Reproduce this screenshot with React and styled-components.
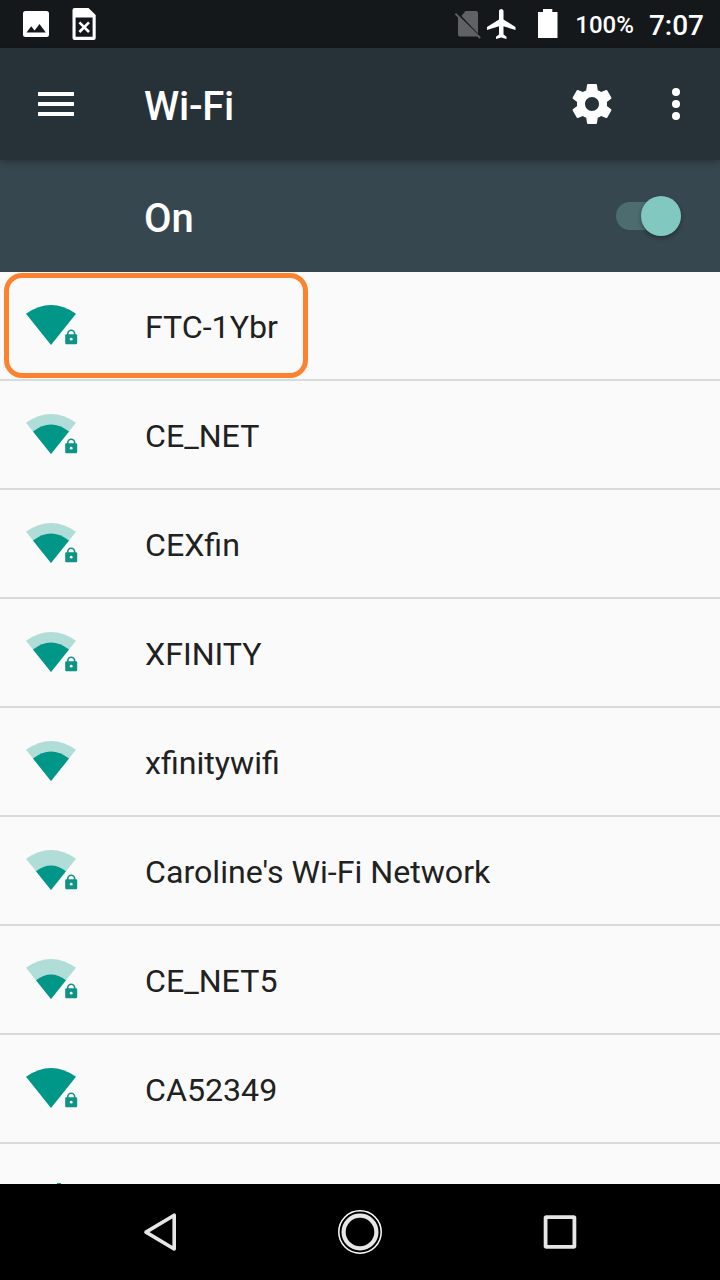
import React from 'react';
import styled, { createGlobalStyle } from 'styled-components';

const GlobalStyle = createGlobalStyle`
  *, *::before, *::after { box-sizing: border-box; }
  html, body { margin: 0; padding: 0; }
  body { font-family: Roboto, "Noto Sans", sans-serif; overflow: hidden; }
  svg { display: block; flex: none; }
`;

const Screen = styled.div`
  display: flex;
  flex-direction: column;
  width: 720px;
  height: 1280px;
  overflow: hidden;
  background: #fafafa;
`;

const StatusBar = styled.header`
  display: flex;
  flex: none;
  align-items: center;
  justify-content: space-between;
  height: 48px;
  padding: 0 16px 0 18px;
  background: #14181b;
  color: #fff;
`;

const Notifications = styled.div`
  display: flex;
  align-items: center;
  gap: 12px;
`;

const SystemIcons = styled.div`
  display: flex;
  align-items: center;
`;

const BatteryLevel = styled.span`
  margin: 1px 0 0 15px;
  font-size: 24px;
  font-weight: 500;
  line-height: 28px;
`;

const Clock = styled.span`
  margin: 3px 0 0 15px;
  font-size: 28px;
  font-weight: 500;
  line-height: 32px;
`;

const Toolbar = styled.div`
  display: flex;
  flex: none;
  align-items: center;
  height: 112px;
  padding: 0 20px 0 32px;
  background: #273238;
  color: #fff;
  box-shadow: 0 2px 7px rgba(0, 0, 0, 0.3);
  z-index: 1;
`;

const IconButton = styled.button`
  display: flex;
  align-items: center;
  justify-content: center;
  width: 48px;
  height: 48px;
  margin: 0 0 0 ${({ $gap }) => $gap || 0}px;
  padding: 0;
  border: 0;
  background: none;
  color: inherit;
`;

const Title = styled.h1`
  flex: 1;
  margin: 6px 0 0 64px;
  font-size: 40px;
  font-weight: 500;
  line-height: 48px;
  letter-spacing: -0.25px;
`;

const SwitchBar = styled.div`
  display: flex;
  flex: none;
  align-items: center;
  justify-content: space-between;
  height: 112px;
  padding: 0 39px 0 144px;
  background: #37474f;
  color: #fff;
`;

const SwitchLabel = styled.span`
  margin-top: 6px;
  font-size: 40px;
  font-weight: 500;
  line-height: 48px;
`;

const Toggle = styled.div`
  display: flex;
  align-items: center;
  justify-content: flex-end;
  width: 65px;
  height: 28px;
  border-radius: 14px;
  background: #4c6c70;
`;

const Thumb = styled.div`
  width: 40px;
  height: 40px;
  border-radius: 50%;
  background: #80c8c0;
  box-shadow: 0 2px 4px rgba(0, 0, 0, 0.35);
`;

const NetworkList = styled.main`
  flex: 1;
  min-height: 0;
  overflow: hidden;
`;

const Row = styled.div`
  position: relative;
  display: flex;
  align-items: center;
  height: 109px;
  padding-left: 16px;
  border-bottom: 2px solid #dadada;
`;

const NetworkName = styled.span`
  margin: 3px 0 0 57px;
  color: #212121;
  font-size: 32.15px;
  line-height: 40px;
  white-space: pre;
`;

const Highlight = styled.div`
  position: absolute;
  top: 1px;
  left: 4px;
  width: 304px;
  height: 105px;
  border: 5px solid #fd822d;
  border-radius: 18px;
`;

const NavBar = styled.nav`
  display: flex;
  flex: none;
  align-items: center;
  justify-content: center;
  gap: 152px;
  height: 96px;
  background: #000;
`;

const fans = {
  2: 'M51 73 L36 54.2 Q51 42.8 66 54.2 Z',
  3: 'M51 73 L33 50.6 Q51 36.6 69 50.6 Z',
  4: 'M51 73 L26 41.7 Q51 24.3 76 41.7 Z',
};

function WifiIcon({ level, locked }) {
  return (
    <svg width="72" height="107" viewBox="16 0 72 107">
      {level < 4 && <path d={fans[4]} fill="#b0ddd7" />}
      <path d={fans[level]} fill="#009688" />
      {locked && (
        <g>
          <path d="M67.8 63v-1.4a3.4 3.4 0 0 1 6.8 0V63" fill="none" stroke="#149284" strokeWidth="1.6" />
          <rect x="65.2" y="62.2" width="12" height="10" rx="1.2" fill="#0f9385" />
          <circle cx="71.2" cy="67.2" r="1.4" fill="#fafafa" />
        </g>
      )}
    </svg>
  );
}

function PictureIcon() {
  return (
    <svg width="36" height="36" viewBox="0 0 36 36" fill="currentColor">
      <path fillRule="evenodd" d="M7.5 5H28.5Q31 5 31 7.5V28.5Q31 31 28.5 31H7.5Q5 31 5 28.5V7.5Q5 5 7.5 5ZM8.5 26.6H27.8L21.5 18L16.6 24.4L13.2 20.3Z" />
    </svg>
  );
}

function SimErrorIcon() {
  return (
    <svg width="36" height="36" viewBox="66 6 36 36">
      <path fillRule="evenodd" fill="currentColor" d="M74.5 8H88.5L95.7 15V38Q95.7 40 93.7 40H74.5Q72.5 40 72.5 38V10Q72.5 8 74.5 8ZM75.6 17.4V36.7H92.6V17.4Z" />
      <path d="M79.4 22.4L89 32M89 22.4L79.4 32" stroke="currentColor" strokeWidth="2.6" />
    </svg>
  );
}

function NoSimIcon() {
  return (
    <svg width="30" height="36" viewBox="452 6 30 36">
      <path d="M464.5 11H475Q477 11 477 13V33.4L460.4 16Z" fill="#5f6163" />
      <path d="M457 16.2L477 36.6H459Q457 36.6 457 34.6Z" fill="#5f6163" />
      <path d="M454.4 13.6L479.2 38" stroke="#5f6163" strokeWidth="2" />
    </svg>
  );
}

function AirplaneIcon() {
  return (
    <svg width="37" height="36" viewBox="-0.67 0 24.67 24" fill="currentColor">
      <path d="M21 16v-2l-8-5V3.5c0-.83-.67-1.5-1.5-1.5S10 2.67 10 3.5V9l-8 5v2l8-2.5V19l-2 1.5V22l3.5-1 3.5 1v-1.5L13 19v-5.5l8 2.5z" />
    </svg>
  );
}

function BatteryIcon() {
  return (
    <svg width="40" height="36" viewBox="520 6 40 36" fill="currentColor">
      <path d="M543 9H552.3V12H557.5V38H538V12H543Z" />
    </svg>
  );
}

function MenuIcon() {
  return (
    <svg width="48" height="48" viewBox="0 0 24 24" fill="currentColor">
      <path d="M3 18h18v-2H3v2zm0-5h18v-2H3v2zm0-7v2h18V6H3z" />
    </svg>
  );
}

function SettingsIcon() {
  return (
    <svg width="48" height="48" viewBox="0 0 24 24" fill="currentColor">
      <path d="M19.43 12.98c.04-.32.07-.64.07-.98s-.03-.66-.07-.98l2.11-1.65c.19-.15.24-.42.12-.64l-2-3.46c-.12-.22-.39-.3-.61-.22l-2.49 1c-.52-.4-1.08-.73-1.69-.98l-.38-2.65C14.46 2.18 14.25 2 14 2h-4c-.25 0-.46.18-.49.42l-.38 2.65c-.61.25-1.17.59-1.69.98l-2.49-1c-.23-.09-.49 0-.61.22l-2 3.46c-.13.22-.07.49.12.64l2.11 1.65c-.04.32-.07.65-.07.98s.03.66.07.98l-2.11 1.65c-.19.15-.24.42-.12.64l2 3.46c.12.22.39.3.61.22l2.49-1c.52.4 1.08.73 1.69.98l.38 2.65c.03.24.24.42.49.42h4c.25 0 .46-.18.49-.42l.38-2.65c.61-.25 1.17-.59 1.69-.98l2.49 1c.23.09.49 0 .61-.22l2-3.46c.12-.22.07-.49-.12-.64l-2.11-1.65zM12 15.5c-1.93 0-3.5-1.57-3.5-3.5s1.57-3.5 3.5-3.5 3.5 1.57 3.5 3.5-1.57 3.5-3.5 3.5z" />
    </svg>
  );
}

function MoreIcon() {
  return (
    <svg width="48" height="48" viewBox="0 0 24 24" fill="currentColor">
      <circle cx="12" cy="6" r="2" />
      <circle cx="12" cy="12" r="2" />
      <circle cx="12" cy="18" r="2" />
    </svg>
  );
}

function AddIcon() {
  return (
    <svg width="72" height="107" viewBox="16 0 72 107">
      <path d="M57 39h4v12h12v4H61v12h-4V55H45v-4h12z" fill="#009688" />
    </svg>
  );
}

function BackIcon() {
  return (
    <svg width="48" height="48" viewBox="136 1208 48 48" fill="none" stroke="#e6e6e6" strokeWidth="3.6" strokeLinejoin="round">
      <path d="M174.2 1215.2V1249L146 1232.1Z" />
    </svg>
  );
}

function HomeIcon() {
  return (
    <svg width="48" height="48" viewBox="336 1208 48 48" fill="none">
      <circle cx="360" cy="1232" r="21.2" stroke="#fff" strokeWidth="1.5" />
      <circle cx="360" cy="1232" r="16.4" stroke="#e6e6e6" strokeWidth="4.2" />
    </svg>
  );
}

function RecentsIcon() {
  return (
    <svg width="48" height="48" viewBox="536 1208 48 48" fill="none">
      <rect x="545.6" y="1217.1" width="28.8" height="29.8" rx="0.8" stroke="#e6e6e6" strokeWidth="3.8" strokeLinejoin="round" />
    </svg>
  );
}

const networks = [
  { name: 'FTC-1Ybr', level: 4, locked: true, highlighted: true },
  { name: 'CE_NET', level: 3, locked: true },
  { name: 'CEXfin', level: 3, locked: true },
  { name: 'XFINITY', level: 3, locked: true },
  { name: 'xfinitywifi', level: 3, locked: false },
  { name: "Caroline's Wi-Fi Network", level: 2, locked: true },
  { name: 'CE_NET5', level: 2, locked: true },
  { name: 'CA52349', level: 4, locked: true },
];

export default function App() {
  return (
    <>
      <GlobalStyle />
      <Screen>
        <StatusBar>
          <Notifications>
            <PictureIcon />
            <SimErrorIcon />
          </Notifications>
          <SystemIcons>
            <NoSimIcon />
            <AirplaneIcon />
            <BatteryIcon />
            <BatteryLevel>100%</BatteryLevel>
            <Clock>7:07</Clock>
          </SystemIcons>
        </StatusBar>
        <Toolbar>
          <IconButton aria-label="Menu"><MenuIcon /></IconButton>
          <Title>Wi-Fi</Title>
          <IconButton aria-label="Settings"><SettingsIcon /></IconButton>
          <IconButton aria-label="More options" $gap={36}><MoreIcon /></IconButton>
        </Toolbar>
        <SwitchBar>
          <SwitchLabel>On</SwitchLabel>
          <Toggle role="switch" aria-checked="true"><Thumb /></Toggle>
        </SwitchBar>
        <NetworkList>
          {networks.map(({ name, level, locked, highlighted }) => (
            <Row key={name}>
              <WifiIcon level={level} locked={locked} />
              <NetworkName>{name}</NetworkName>
              {highlighted && <Highlight />}
            </Row>
          ))}
          <Row>
            <AddIcon />
          </Row>
        </NetworkList>
        <NavBar>
          <BackIcon />
          <HomeIcon />
          <RecentsIcon />
        </NavBar>
      </Screen>
    </>
  );
}
